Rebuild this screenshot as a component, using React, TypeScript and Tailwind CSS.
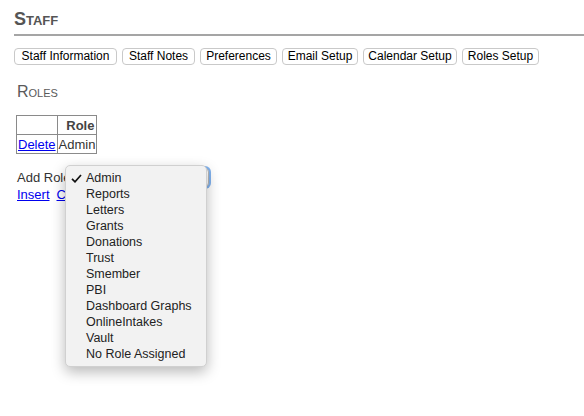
const tabs = [
    { label: 'Staff Information', w: 'w-[103px]' },
    { label: 'Staff Notes', w: 'w-[73px]' },
    { label: 'Preferences', w: 'w-[77px]' },
    { label: 'Email Setup', w: 'w-[76px]' },
    { label: 'Calendar Setup', w: 'w-[94px]' },
    { label: 'Roles Setup', w: 'w-[77px]' },
];

const roles = [
    'Admin',
    'Reports',
    'Letters',
    'Grants',
    'Donations',
    'Trust',
    'Smember',
    'PBI',
    'Dashboard Graphs',
    'OnlineIntakes',
    'Vault',
    'No Role Assigned',
];

function Check() {
    return (
        <svg width="11" height="9" viewBox="0 0 11 9" className="absolute left-[5px] top-[4px]">
            <path d="M1 4.8 L4 7.8 L10 1" fill="none" stroke="#111" strokeWidth="1.7" />
        </svg>
    );
}

export default function App() {
    return (
        <main className="min-h-screen bg-white pl-[14px] pt-[9px] font-['Liberation_Sans',Arial,sans-serif] text-black">
            <h1 className="border-b-2 border-[#a5a5a5] pb-[5px] text-[18px] font-bold leading-[20px] text-[#555] [font-variant:small-caps]">
                Staff
            </h1>

            <nav className="mt-[12px] flex gap-[5px]">
                {tabs.map((t) => (
                    <button
                        key={t.label}
                        className={`${t.w} h-[17px] shrink-0 rounded-[4px] border border-[#c9c9c9] bg-white p-0 text-center text-[12px] leading-[15px] text-black`}
                    >
                        {t.label}
                    </button>
                ))}
            </nav>

            <section className="pl-[3px]">
                <h2 className="mt-[18px] text-[16px] leading-[18px] text-[#5a5a5a] [font-variant:small-caps]">Roles</h2>

                <table className="ml-[-1px] mt-[14px] border-collapse text-[13px] leading-[17px]">
                    <thead>
                        <tr className="h-[19px]">
                            <th className="w-[39px] border border-[#8a8a8a] p-0"></th>
                            <th className="w-[39px] border border-[#8a8a8a] p-0 pr-[2px] text-right font-bold text-[#444]">Role</th>
                        </tr>
                    </thead>
                    <tbody>
                        <tr className="h-[19px]">
                            <td className="border border-[#8a8a8a] px-[1px] py-0">
                                <a href="#" className="text-[#0000ee] underline">Delete</a>
                            </td>
                            <td className="border border-[#8a8a8a] px-[1px] py-0 text-[#333]">Admin</td>
                        </tr>
                    </tbody>
                </table>

                <div className="relative mt-[14px] flex h-[19px] items-center text-[13px] text-[#333]">
                    <span>Add Role</span>
                    <div className="ml-[4px] h-[19px] w-[135px] rounded-[4px] border border-[#b8b8b8] bg-white ring-2 ring-[#82b3ef]"></div>

                    <ul className="absolute left-[48px] top-[-3px] z-10 w-[142px] rounded-[5px] border border-[#d0d0d0] bg-[#f2f2f2] py-[4px] shadow-[0_5px_14px_rgba(0,0,0,0.28)]">
                        {roles.map((r, i) => (
                            <li key={r} className="relative h-[16px] pl-[20px] text-[12.5px] leading-[16px] text-[#222]">
                                {i === 0 && <Check />}
                                {r}
                            </li>
                        ))}
                    </ul>
                </div>

                <div className="mt-[-1px] flex gap-[7px] text-[13px] leading-[17px]">
                    <a href="#" className="text-[#0000ee] underline">Insert</a>
                    <a href="#" className="text-[#0000ee] underline">Cancel</a>
                </div>
            </section>
        </main>
    );
}
